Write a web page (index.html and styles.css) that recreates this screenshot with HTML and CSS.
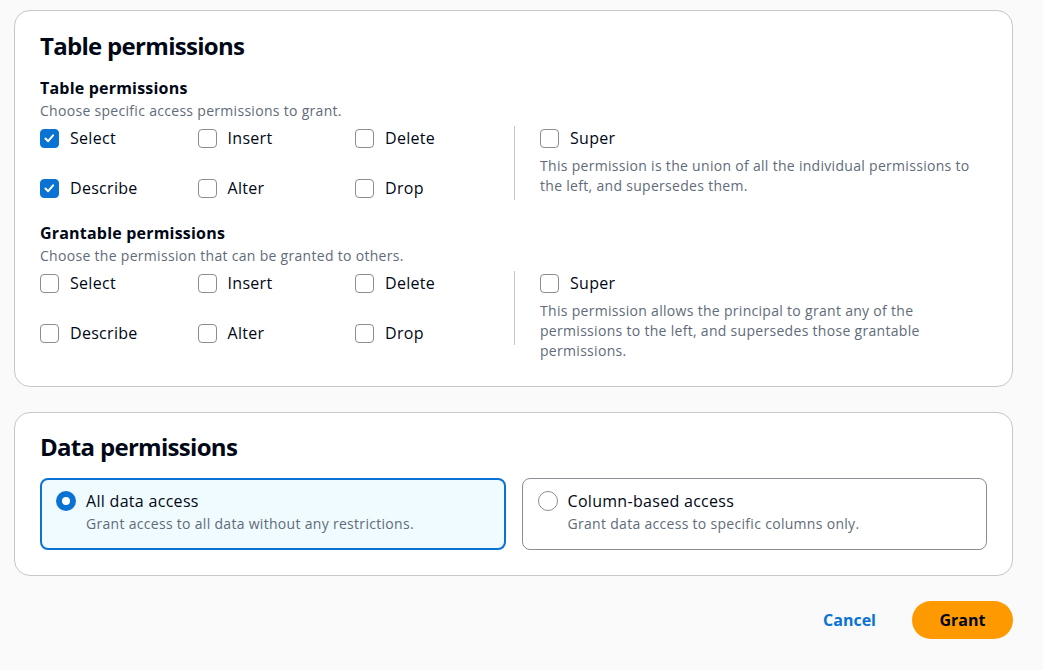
FILE: index.html
```html
<!DOCTYPE html>
<html>
  <head>
    <meta charset="utf-8">
    <title>Grant permissions</title>
    <link rel="stylesheet" href="styles.css">
  </head>
  <body>
    <main class="page">
      <section class="container">
        <h2 class="title">Table permissions</h2>

        <div class="field">
          <h3 class="label">Table permissions</h3>
          <p class="description">Choose specific access permissions to grant.</p>
          <div class="columns">
            <div class="options">
              <label class="checkbox"><span class="box checked"></span>Select</label>
              <label class="checkbox"><span class="box"></span>Insert</label>
              <label class="checkbox"><span class="box"></span>Delete</label>
              <label class="checkbox"><span class="box checked"></span>Describe</label>
              <label class="checkbox"><span class="box"></span>Alter</label>
              <label class="checkbox"><span class="box"></span>Drop</label>
            </div>
            <div class="super">
              <label class="checkbox"><span class="box"></span>Super</label>
              <p class="description">This permission is the union of all the individual permissions to the left, and supersedes them.</p>
            </div>
          </div>
        </div>

        <div class="field">
          <h3 class="label">Grantable permissions</h3>
          <p class="description">Choose the permission that can be granted to others.</p>
          <div class="columns">
            <div class="options">
              <label class="checkbox"><span class="box"></span>Select</label>
              <label class="checkbox"><span class="box"></span>Insert</label>
              <label class="checkbox"><span class="box"></span>Delete</label>
              <label class="checkbox"><span class="box"></span>Describe</label>
              <label class="checkbox"><span class="box"></span>Alter</label>
              <label class="checkbox"><span class="box"></span>Drop</label>
            </div>
            <div class="super">
              <label class="checkbox"><span class="box"></span>Super</label>
              <p class="description">This permission allows the principal to grant any of the permissions to the left, and supersedes those grantable permissions.</p>
            </div>
          </div>
        </div>
      </section>

      <section class="container data">
        <h2 class="title">Data permissions</h2>
        <div class="tiles">
          <label class="tile selected">
            <span class="radio"></span>
            <span class="tile-text">
              <span class="tile-label">All data access</span>
              <span class="description">Grant access to all data without any restrictions.</span>
            </span>
          </label>
          <label class="tile">
            <span class="radio"></span>
            <span class="tile-text">
              <span class="tile-label">Column-based access</span>
              <span class="description">Grant data access to specific columns only.</span>
            </span>
          </label>
        </div>
      </section>

      <div class="actions">
        <button class="button link">Cancel</button>
        <button class="button primary">Grant</button>
      </div>
    </main>
  </body>
</html>
```

FILE: styles.css
```css
body {
  margin: 0;
  padding: 0;
  background-color: #fafafa;
  color: #000716;
  font-family: "Open Sans", "Noto Sans", sans-serif;
}

.page {
  width: 999px;
  padding: 10px 0 0 14px;
}

.container {
  margin-bottom: 25px;
  padding: 20px 25px 25px;
  border: 1px solid #c6c6cd;
  border-radius: 16px;
  background-color: #ffffff;
}

.container.data {
  padding-top: 19px;
}

.title {
  margin: 0 0 16px;
  font-size: 24px;
  line-height: 30px;
  font-weight: 700;
  letter-spacing: -0.7px;
}

.field + .field {
  margin-top: 22px;
}

.label {
  margin: 0;
  font-size: 16px;
  line-height: 22px;
  font-weight: 700;
  letter-spacing: 0.2px;
}

.description {
  display: block;
  margin: 2px 0 0;
  color: #5f6b7a;
  font-size: 14px;
  line-height: 20px;
  letter-spacing: 0.3px;
}

.columns {
  display: flex;
  margin-top: 5px;
}

.options {
  display: grid;
  grid-template-columns: repeat(3, 157.5px);
  row-gap: 26px;
  width: 474px;
  align-self: flex-start;
  border-right: 1px solid #c6c6cd;
}

.super {
  flex: 1;
  padding-left: 25px;
}

.super .description {
  margin-top: 6px;
}

.checkbox {
  display: flex;
  align-items: center;
  gap: 11px;
  height: 24px;
  font-size: 16px;
  letter-spacing: 0.3px;
}

.box {
  box-sizing: border-box;
  width: 19px;
  height: 19px;
  border: 1.5px solid #8c8c94;
  border-radius: 4px;
  background-color: #ffffff;
}

.box.checked {
  border-color: #0972d3;
  background-color: #0972d3;
  background-image: url("data:image/svg+xml,%3Csvg xmlns='http://www.w3.org/2000/svg' viewBox='0 0 19 19'%3E%3Cpolyline points='5,9.5 8,12.5 13.5,6' fill='none' stroke='white' stroke-width='2.2' stroke-linecap='round' stroke-linejoin='round'/%3E%3C/svg%3E");
}

.tiles {
  display: flex;
  gap: 16px;
}

.tile {
  box-sizing: border-box;
  display: flex;
  flex: 1;
  gap: 10px;
  height: 72px;
  padding: 11px 15px;
  border: 1px solid #8c8c94;
  border-radius: 8px;
  background-color: #ffffff;
}

.tile.selected {
  border: 2px solid #0972d3;
  padding: 10px 14px;
  background-color: #f0fbff;
}

.radio {
  box-sizing: border-box;
  flex: none;
  width: 20px;
  height: 20px;
  margin-top: 1px;
  border: 1.5px solid #8c8c94;
  border-radius: 50%;
  background-color: #ffffff;
}

.tile.selected .radio {
  border: 6px solid #0972d3;
}

.tile-text {
  display: flex;
  flex-direction: column;
}

.tile-label {
  font-size: 16px;
  line-height: 22px;
  letter-spacing: 0.3px;
}

.tile .description {
  margin-top: 2px;
}

.actions {
  display: flex;
  justify-content: flex-end;
  align-items: center;
  gap: 16px;
  margin-top: 25px;
}

.button {
  height: 38px;
  border: none;
  border-radius: 20px;
  font-family: inherit;
  font-size: 16px;
  font-weight: 700;
  cursor: pointer;
}

.button.link {
  padding: 0 20px;
  background: none;
  color: #0972d3;
}

.button.primary {
  width: 101px;
  background-color: #ff9900;
  color: #000716;
}
```
